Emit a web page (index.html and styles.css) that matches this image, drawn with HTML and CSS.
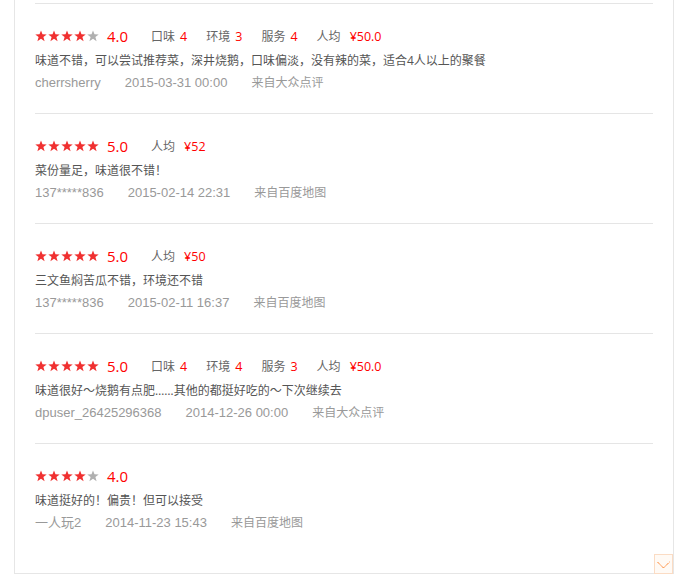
FILE: index.html
```html
<!DOCTYPE html>
<html lang="zh-CN">

<head>
    <meta charset="UTF-8">
    <title>评论</title>
    <link rel="stylesheet" href="styles.css">
</head>

<body>

    <!-- Review list -->
    <div class="review-list" id="reviewList"></div>

    <script>
        const reviews = [
            { stars: 4, score: '4.0', taste: 4, env: 3, service: 4, price: '¥50.0',
              text: '味道不错，可以尝试推荐菜，深井烧鹅，口味偏淡，没有辣的菜，适合4人以上的聚餐',
              user: 'cherrsherry', time: '2015-03-31 00:00', from: '来自大众点评' },
            { stars: 5, score: '5.0', price: '¥52',
              text: '菜份量足，味道很不错！',
              user: '137*****836', time: '2015-02-14 22:31', from: '来自百度地图' },
            { stars: 5, score: '5.0', price: '¥50',
              text: '三文鱼焖苦瓜不错，环境还不错',
              user: '137*****836', time: '2015-02-11 16:37', from: '来自百度地图' },
            { stars: 5, score: '5.0', taste: 4, env: 4, service: 3, price: '¥50.0',
              text: '味道很好～烧鹅有点肥……其他的都挺好吃的～下次继续去',
              user: 'dpuser_26425296368', time: '2014-12-26 00:00', from: '来自大众点评' },
            { stars: 4, score: '4.0',
              text: '味道挺好的！偏贵！但可以接受',
              user: '一人玩2', time: '2014-11-23 15:43', from: '来自百度地图' }
        ];

        const starSvg = '<svg viewBox="0 0 12 12" width="12" height="12"><polygon points="6,0.4 7.5,4.2 11.7,4.4 8.4,7 9.6,11.3 6,8.8 2.4,11.3 3.6,7 0.3,4.4 4.5,4.2"/></svg>';

        function item(label, value, cls) {
            return '<span class="item"><span class="label">' + label + '</span><span class="' + cls + '">' + value + '</span></span>';
        }

        const list = document.getElementById('reviewList');
        reviews.forEach(r => {
            let stars = '';
            for (let i = 0; i < 5; i++) {
                stars += '<span class="star' + (i < r.stars ? '' : ' off') + '">' + starSvg + '</span>';
            }
            let details = '';
            if (r.taste) details += item('口味', r.taste, 'value');
            if (r.env) details += item('环境', r.env, 'value');
            if (r.service) details += item('服务', r.service, 'value');
            if (r.price) details += item('人均', r.price, 'value price');

            const div = document.createElement('div');
            div.className = 'review';
            div.innerHTML =
                '<div class="score-row"><span class="stars">' + stars + '</span>' +
                '<span class="score">' + r.score + '</span>' + details + '</div>' +
                '<div class="comment">' + r.text + '</div>' +
                '<div class="meta"><span class="latin">' + r.user + '</span><span class="latin">' + r.time + '</span><span>' + r.from + '</span></div>';
            list.appendChild(div);
        });

        // Expand button in the corner
        const more = document.createElement('div');
        more.className = 'more-btn';
        more.innerHTML = '<svg viewBox="0 0 19 20" width="19" height="20"><polyline points="3.5,8 9.5,14 15.5,8" fill="none" stroke="#ff6a00" stroke-width="1" stroke-dasharray="1.2 0.6"/></svg>';
        list.appendChild(more);
    </script>
</body>

</html>
```

FILE: styles.css
```css
/* Global Styles */
body {
    margin: 0;
    font-family: 'Open Sans', 'Noto Sans CJK SC', sans-serif;
    font-size: 12px;
    background-color: #fff;
    color: #555;
}

/* Review List */
.review-list {
    position: relative;
    margin-left: 14px;
    width: 618px;
    padding: 3px 20px 20px;
    border: 1px solid #e6e6e6;
    border-top: none;
}

.review {
    border-top: 1px solid #e5e5e5;
    padding: 20px 0 19px;
}

.score-row {
    display: flex;
    align-items: center;
    height: 24px;
}

.stars {
    display: inline-flex;
    gap: 1px;
}

.star {
    display: block;
    width: 12px;
    height: 12px;
}

.star svg {
    display: block;
    fill: #f03030;
}

.star.off svg {
    fill: #b0b0b0;
}

.score {
    margin-left: 8px;
    margin-right: 23px;
    font-size: 15px;
    color: #f00;
}

.item {
    margin-right: 19px;
    color: #666;
}

.value {
    margin-left: 5px;
    font-size: 12.5px;
    color: #f00;
}

.value.price {
    margin-left: 9px;
}

.comment {
    margin-top: 2px;
    line-height: 22px;
    color: #555;
}

.meta {
    display: flex;
    gap: 24px;
    line-height: 22px;
    color: #999;
}

.meta .latin {
    font-family: 'Liberation Sans', 'Noto Sans CJK SC', sans-serif;
    font-size: 13px;
}

/* Expand button */
.more-btn {
    position: absolute;
    right: 0;
    bottom: -1px;
    width: 17px;
    height: 18px;
    border: 1px solid #fbdcc4;
    background-color: #fffaf5;
}

.more-btn svg {
    display: block;
    margin: -1px;
}
```
